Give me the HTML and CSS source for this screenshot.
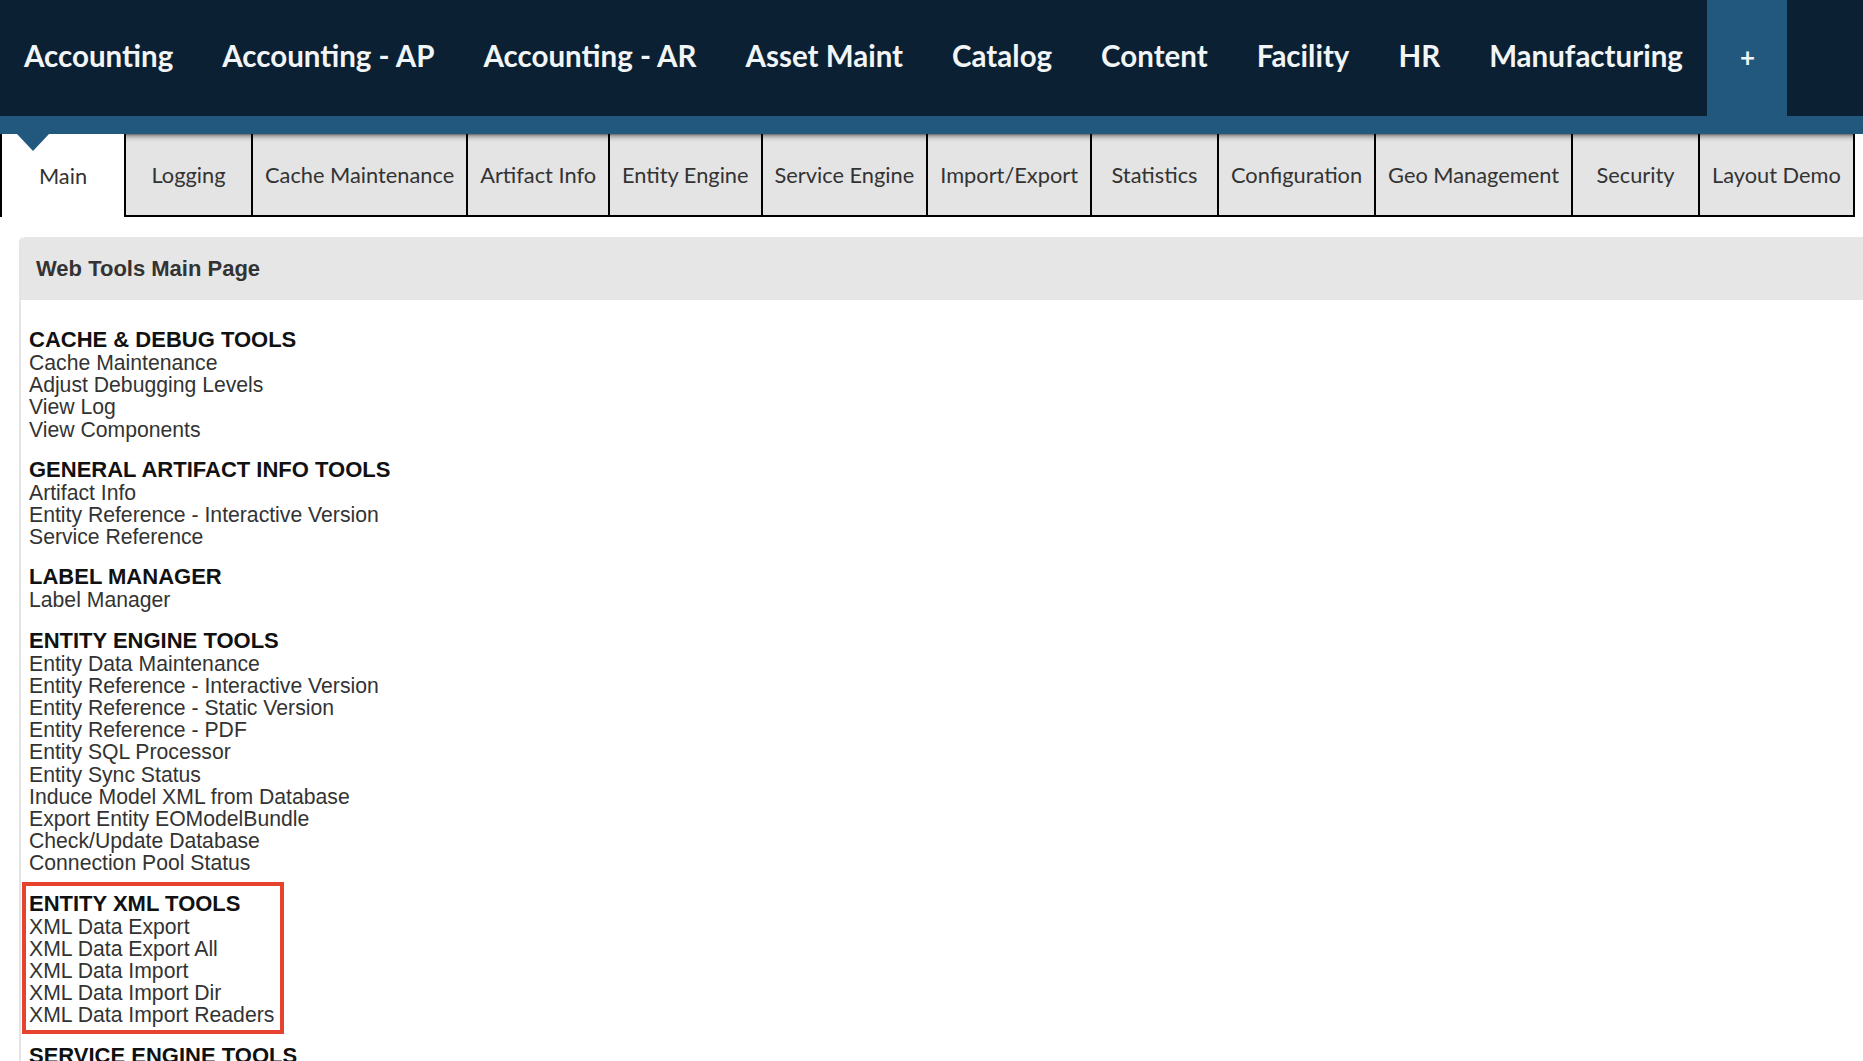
FILE: index.html
```html
<!DOCTYPE html>
<html lang="en">
<head>
<meta charset="utf-8">
<title>Web Tools Main Page</title>
<link rel="stylesheet" href="styles.css">
</head>
<body>
<header class="app-nav">
  <nav class="app-menu">
    <a class="app-item" href="#">Accounting</a>
    <a class="app-item" href="#">Accounting - AP</a>
    <a class="app-item" href="#">Accounting - AR</a>
    <a class="app-item" href="#">Asset Maint</a>
    <a class="app-item" href="#">Catalog</a>
    <a class="app-item" href="#">Content</a>
    <a class="app-item" href="#">Facility</a>
    <a class="app-item" href="#">HR</a>
    <a class="app-item" href="#">Manufacturing</a>
    <a class="app-item app-more" href="#">+</a>
  </nav>
</header>
<div class="strip"></div>
<nav class="tabs">
  <a class="tab tab-active" href="#">Main</a>
  <a class="tab" href="#">Logging</a>
  <a class="tab" href="#">Cache Maintenance</a>
  <a class="tab" href="#">Artifact Info</a>
  <a class="tab" href="#">Entity Engine</a>
  <a class="tab" href="#">Service Engine</a>
  <a class="tab" href="#">Import/Export</a>
  <a class="tab" href="#">Statistics</a>
  <a class="tab" href="#">Configuration</a>
  <a class="tab" href="#">Geo Management</a>
  <a class="tab" href="#">Security</a>
  <a class="tab" href="#">Layout Demo</a>
</nav>
<main class="panel">
  <div class="panel-header">Web Tools Main Page</div>
  <div class="panel-body">
    <section class="group">
      <h3 class="group-title">CACHE &amp; DEBUG TOOLS</h3>
      <a class="tool" href="#">Cache Maintenance</a>
      <a class="tool" href="#">Adjust Debugging Levels</a>
      <a class="tool" href="#">View Log</a>
      <a class="tool" href="#">View Components</a>
    </section>
    <section class="group">
      <h3 class="group-title">GENERAL ARTIFACT INFO TOOLS</h3>
      <a class="tool" href="#">Artifact Info</a>
      <a class="tool" href="#">Entity Reference - Interactive Version</a>
      <a class="tool" href="#">Service Reference</a>
    </section>
    <section class="group">
      <h3 class="group-title">LABEL MANAGER</h3>
      <a class="tool" href="#">Label Manager</a>
    </section>
    <section class="group">
      <h3 class="group-title">ENTITY ENGINE TOOLS</h3>
      <a class="tool" href="#">Entity Data Maintenance</a>
      <a class="tool" href="#">Entity Reference - Interactive Version</a>
      <a class="tool" href="#">Entity Reference - Static Version</a>
      <a class="tool" href="#">Entity Reference - PDF</a>
      <a class="tool" href="#">Entity SQL Processor</a>
      <a class="tool" href="#">Entity Sync Status</a>
      <a class="tool" href="#">Induce Model XML from Database</a>
      <a class="tool" href="#">Export Entity EOModelBundle</a>
      <a class="tool" href="#">Check/Update Database</a>
      <a class="tool" href="#">Connection Pool Status</a>
    </section>
    <section class="group group-marked">
      <h3 class="group-title">ENTITY XML TOOLS</h3>
      <a class="tool" href="#">XML Data Export</a>
      <a class="tool" href="#">XML Data Export All</a>
      <a class="tool" href="#">XML Data Import</a>
      <a class="tool" href="#">XML Data Import Dir</a>
      <a class="tool" href="#">XML Data Import Readers</a>
    </section>
    <section class="group">
      <h3 class="group-title">SERVICE ENGINE TOOLS</h3>
      <a class="tool" href="#">Service Reference</a>
      <a class="tool" href="#">Scheduled Jobs</a>
      <a class="tool" href="#">Run Service</a>
      <a class="tool" href="#">Service Log</a>
      <a class="tool" href="#">Thread List</a>
    </section>
  </div>
</main>
</body>
</html>
```
FILE: styles.css
```css
html, body {
  margin: 0;
  padding: 0;
  background: #ffffff;
}

body {
  font-family: "Liberation Sans", Arial, sans-serif;
  overflow-x: hidden;
}

a {
  text-decoration: none;
}

/* Top application bar */
.app-nav {
  background: #0b2133;
  height: 116px;
}

.app-menu {
  display: flex;
  height: 100%;
  align-items: stretch;
}

.app-item {
  display: flex;
  align-items: center;
  padding: 0 24.5px 5px;
  font-family: Lato, "Open Sans", sans-serif;
  font-weight: 700;
  font-size: 29.5px;
  color: #f2f5f7;
  white-space: nowrap;
}

.app-item:first-child {
  padding-left: 24px;
}

.app-more {
  width: 80px;
  padding: 0 0 3px;
  justify-content: center;
  background: #22577e;
  font-size: 26px;
}

.strip {
  height: 18px;
  background: #22577e;
}

/* Tab row */
.tabs {
  display: flex;
  height: 83px;
}

.tab {
  position: relative;
  box-sizing: border-box;
  min-width: 127px;
  display: flex;
  align-items: center;
  justify-content: center;
  padding: 0 12px;
  border-right: 2px solid #000;
  border-bottom: 2px solid #000;
  background: linear-gradient(#6a6a6a 0, #a9a9a9 2px, #d4d4d4 5px, #e4e4e4 8px, #e4e4e4 100%);
  font-family: Lato, "Open Sans", sans-serif;
  font-size: 21.8px;
  color: #333333;
  white-space: nowrap;
}

.tab-active {
  min-width: 126px;
  border-left: 2px solid #000;
  border-bottom: none;
  background: #ffffff;
}

.tab-active::before {
  content: "";
  position: absolute;
  top: 0;
  left: 15px;
  border-left: 16px solid transparent;
  border-right: 16px solid transparent;
  border-top: 17px solid #22577e;
}

/* Content panel */
.panel {
  margin: 20px 0 0 19px;
  border-left: 2px solid #e4e4e4;
  border-top-left-radius: 5px;
}

.panel-header {
  height: 63px;
  display: flex;
  align-items: center;
  padding-left: 15px;
  background: #e6e6e6;
  border-top-left-radius: 5px;
  font-weight: 700;
  font-size: 22px;
  color: #333333;
}

.panel-body {
  padding: 28px 0 40px 8px;
}

.group {
  position: relative;
  display: flex;
  flex-direction: column;
  align-items: flex-start;
  margin-bottom: 17px;
}

.group-title {
  margin: 0;
  font-size: 22px;
  line-height: 24px;
  font-weight: 700;
  color: #111111;
}

.tool {
  font-size: 21.2px;
  line-height: 22.2px;
  color: #333333;
}

.group-marked::after {
  content: "";
  position: absolute;
  top: -10px;
  bottom: -7px;
  left: -7px;
  width: 262px;
  box-sizing: border-box;
  border: 4px solid #e5432d;
  pointer-events: none;
}
```
